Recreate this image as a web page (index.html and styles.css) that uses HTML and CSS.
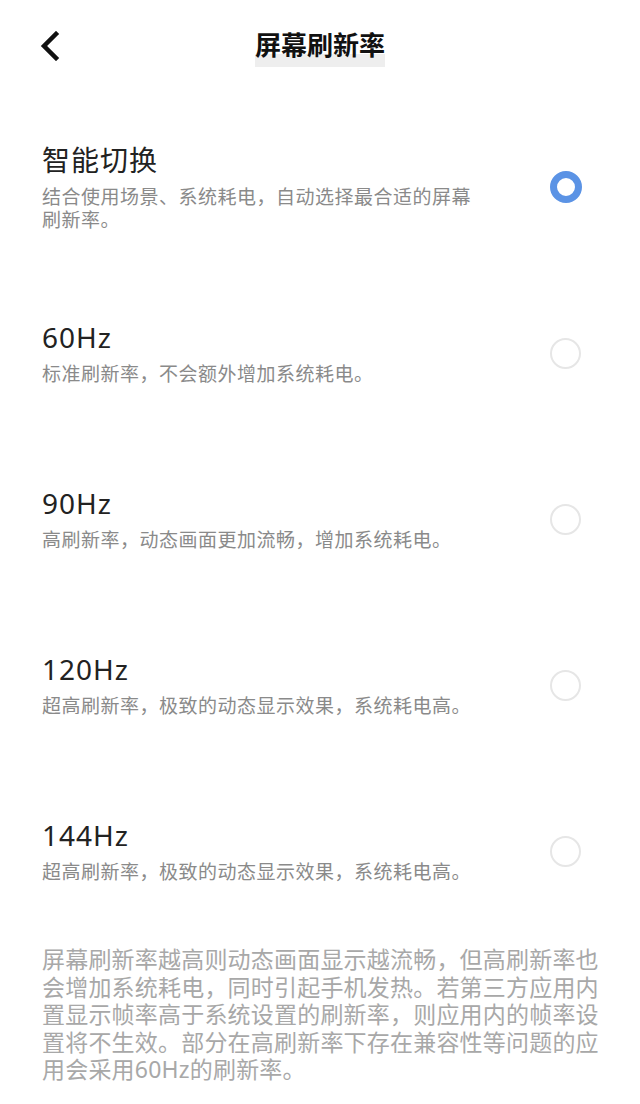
FILE: index.html
```html
<!DOCTYPE html>
<html lang="zh-CN">
<head>
  <meta charset="UTF-8" />
  <meta name="viewport" content="width=device-width, initial-scale=1" />
  <title>屏幕刷新率</title>
  <link rel="stylesheet" href="styles.css">
</head>
<body>

  <header class="topbar">
    <button class="back" aria-label="返回">
      <svg width="22" height="30" viewBox="0 0 22 30">
        <path d="M16 3 L4 15 L16 27" fill="none" stroke="#111" stroke-width="4.5" stroke-linecap="square" stroke-linejoin="miter" />
      </svg>
    </button>
    <h1 class="title"><span>屏幕刷新率</span></h1>
  </header>

  <ul class="options">
    <li class="option">
      <div class="text">
        <div class="name">智能切换</div>
        <div class="desc">结合使用场景、系统耗电，自动选择最合适的屏幕刷新率。</div>
      </div>
      <span class="radio checked"></span>
    </li>
    <li class="option">
      <div class="text">
        <div class="name">60Hz</div>
        <div class="desc">标准刷新率，不会额外增加系统耗电。</div>
      </div>
      <span class="radio"></span>
    </li>
    <li class="option">
      <div class="text">
        <div class="name">90Hz</div>
        <div class="desc">高刷新率，动态画面更加流畅，增加系统耗电。</div>
      </div>
      <span class="radio"></span>
    </li>
    <li class="option">
      <div class="text">
        <div class="name">120Hz</div>
        <div class="desc">超高刷新率，极致的动态显示效果，系统耗电高。</div>
      </div>
      <span class="radio"></span>
    </li>
    <li class="option">
      <div class="text">
        <div class="name">144Hz</div>
        <div class="desc">超高刷新率，极致的动态显示效果，系统耗电高。</div>
      </div>
      <span class="radio"></span>
    </li>
  </ul>

  <p class="note">屏幕刷新率越高则动态画面显示越流畅，但高刷新率也会增加系统耗电，同时引起手机发热。若第三方应用内置显示帧率高于系统设置的刷新率，则应用内的帧率设置将不生效。部分在高刷新率下存在兼容性等问题的应用会采用60Hz的刷新率。</p>

</body>
</html>
```

FILE: styles.css
```css
body {
  margin: 0;
  background: #ffffff;
  font-family: "Noto Sans", "Noto Sans CJK SC", sans-serif;
  color: #222;
}

.topbar {
  position: relative;
  height: 92px;
  display: flex;
  align-items: center;
  justify-content: center;
}
.back {
  position: absolute;
  left: 40px;
  top: 31px;
  padding: 0;
  border: none;
  background: none;
  display: flex;
}
.title {
  margin: 0;
  font-size: 26px;
  font-weight: bold;
  color: #111;
  font-family: "Noto Sans CJK SC", sans-serif;
}
.title span {
  display: inline-block;
  line-height: 30px;
  padding: 3px 0 8px;
  background: linear-gradient(to bottom, #ffffff 0%, #ffffff 68%, #eeeeee 68%);
}

.options {
  list-style: none;
  margin: 12px 0 0;
  padding: 0;
}
.option {
  height: 166px;
  display: flex;
  align-items: center;
  padding: 0 59px 0 42px;
}
.text {
  flex: 1;
}
.name {
  font-size: 28px;
  line-height: 34px;
  color: #222;
  letter-spacing: 1px;
}
.desc {
  margin-top: 9px;
  max-width: 440px;
  font-size: 19px;
  line-height: 23px;
  letter-spacing: 0.5px;
  color: #8a8a8a;
}

.radio {
  width: 31px;
  height: 31px;
  box-sizing: border-box;
  border: 2.5px solid #e6e6e6;
  border-radius: 50%;
}
.radio.checked {
  width: 32px;
  height: 32px;
  margin-right: -1px;
  border: 7px solid #5b93e5;
}

.note {
  margin: 0;
  padding: 12px 36px 20px 42px;
  font-size: 23px;
  line-height: 27.5px;
  letter-spacing: 0.2px;
  color: #a8a8a8;
}
```
